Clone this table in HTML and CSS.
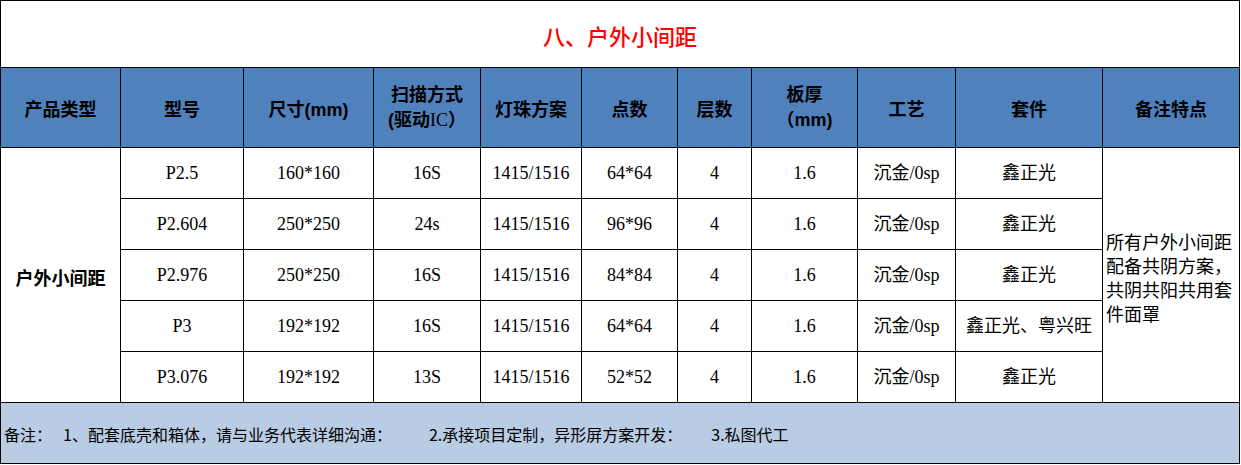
FILE: index.html
```html
<!DOCTYPE html>
<html lang="zh-CN">
<head>
<meta charset="utf-8">
<title>八、户外小间距</title>
<link rel="stylesheet" href="styles.css">
</head>
<body>
<div class="sheet">
  <div class="cell title">八、户外小间距</div>

  <div class="cell head">产品类型</div>
  <div class="cell head">型号</div>
  <div class="cell head">尺寸(mm)</div>
  <div class="cell head two"><span class="stack">扫描方式<br>(驱动<span class="serif">IC</span>）</span></div>
  <div class="cell head">灯珠方案</div>
  <div class="cell head">点数</div>
  <div class="cell head">层数</div>
  <div class="cell head two"><span class="stack">板厚<br>（mm)</span></div>
  <div class="cell head">工艺</div>
  <div class="cell head">套件</div>
  <div class="cell head">备注特点</div>

  <div class="cell type">户外小间距</div>
  <div class="cell">P2.5</div><div class="cell">160*160</div><div class="cell">16S</div><div class="cell">1415/1516</div><div class="cell">64*64</div><div class="cell">4</div><div class="cell">1.6</div><div class="cell">沉金/0sp</div><div class="cell">鑫正光</div>
  <div class="cell note">所有户外小间距配备共阴方案，共阴共阳共用套件面罩</div>

  <div class="cell">P2.604</div><div class="cell">250*250</div><div class="cell">24s</div><div class="cell">1415/1516</div><div class="cell">96*96</div><div class="cell">4</div><div class="cell">1.6</div><div class="cell">沉金/0sp</div><div class="cell">鑫正光</div>

  <div class="cell">P2.976</div><div class="cell">250*250</div><div class="cell">16S</div><div class="cell">1415/1516</div><div class="cell">84*84</div><div class="cell">4</div><div class="cell">1.6</div><div class="cell">沉金/0sp</div><div class="cell">鑫正光</div>

  <div class="cell">P3</div><div class="cell">192*192</div><div class="cell">16S</div><div class="cell">1415/1516</div><div class="cell">64*64</div><div class="cell">4</div><div class="cell">1.6</div><div class="cell">沉金/0sp</div><div class="cell">鑫正光、粤兴旺</div>

  <div class="cell">P3.076</div><div class="cell">192*192</div><div class="cell">13S</div><div class="cell">1415/1516</div><div class="cell">52*52</div><div class="cell">4</div><div class="cell">1.6</div><div class="cell">沉金/0sp</div><div class="cell">鑫正光</div>

  <div class="cell foot">
    <span class="f0">备注：</span>
    <span class="f1">1、配套底壳和箱体，请与业务代表详细沟通：</span>
    <span class="f2">2.承接项目定制，异形屏方案开发：</span>
    <span class="f3">3.私图代工</span>
  </div>
</div>
</body>
</html>
```

FILE: styles.css
```css
html, body {
  margin: 0;
  padding: 0;
  background: #ffffff;
}

.sheet {
  display: grid;
  grid-template-columns: 119px 122px 129px 106px 100px 95px 73px 105px 97px 146px 136px;
  grid-template-rows: 66px 79px 50px 50px 50px 50px 50px 60px;
  gap: 1px;
  padding: 1px;
  width: max-content;
  background: #000000;
}

.cell {
  background: #ffffff;
  display: flex;
  align-items: center;
  justify-content: center;
  text-align: center;
  color: #000000;
  font-family: "Liberation Serif", "Noto Sans CJK SC", serif;
  font-size: 18px;
  line-height: 22px;
  white-space: nowrap;
}

.title {
  grid-column: 1 / -1;
  color: #ff0000;
  font-family: "Noto Sans CJK SC", sans-serif;
  font-size: 22px;
  font-weight: 500;
  padding-top: 2px;
}

.head {
  background: #4f81bd;
  font-family: "Liberation Sans", "Noto Sans CJK SC", sans-serif;
  font-weight: 700;
  font-size: 18px;
  padding-top: 4px;
}

.head.two {
  line-height: 25px;
  padding-top: 0;
}

.stack {
  display: block;
}

.serif {
  font-family: "Liberation Serif", serif;
  font-weight: 400;
}

.type {
  grid-row: span 5;
  font-family: "Noto Sans CJK SC", sans-serif;
  font-weight: 700;
  padding-top: 4px;
}

.note {
  grid-row: span 5;
  justify-content: flex-start;
  text-align: left;
  white-space: normal;
  font-family: "Noto Sans CJK SC", sans-serif;
  line-height: 24px;
  padding: 4px 4px 0 3px;
}

.foot {
  grid-column: 1 / -1;
  background: #b8cce4;
  justify-content: flex-start;
  font-family: "Noto Sans CJK SC", sans-serif;
  font-size: 16px;
  padding-left: 3px;
  padding-top: 2px;
}

.f1 { margin-left: 11px; }
.f2 { margin-left: 37px; }
.f3 { margin-left: 29px; }
```
